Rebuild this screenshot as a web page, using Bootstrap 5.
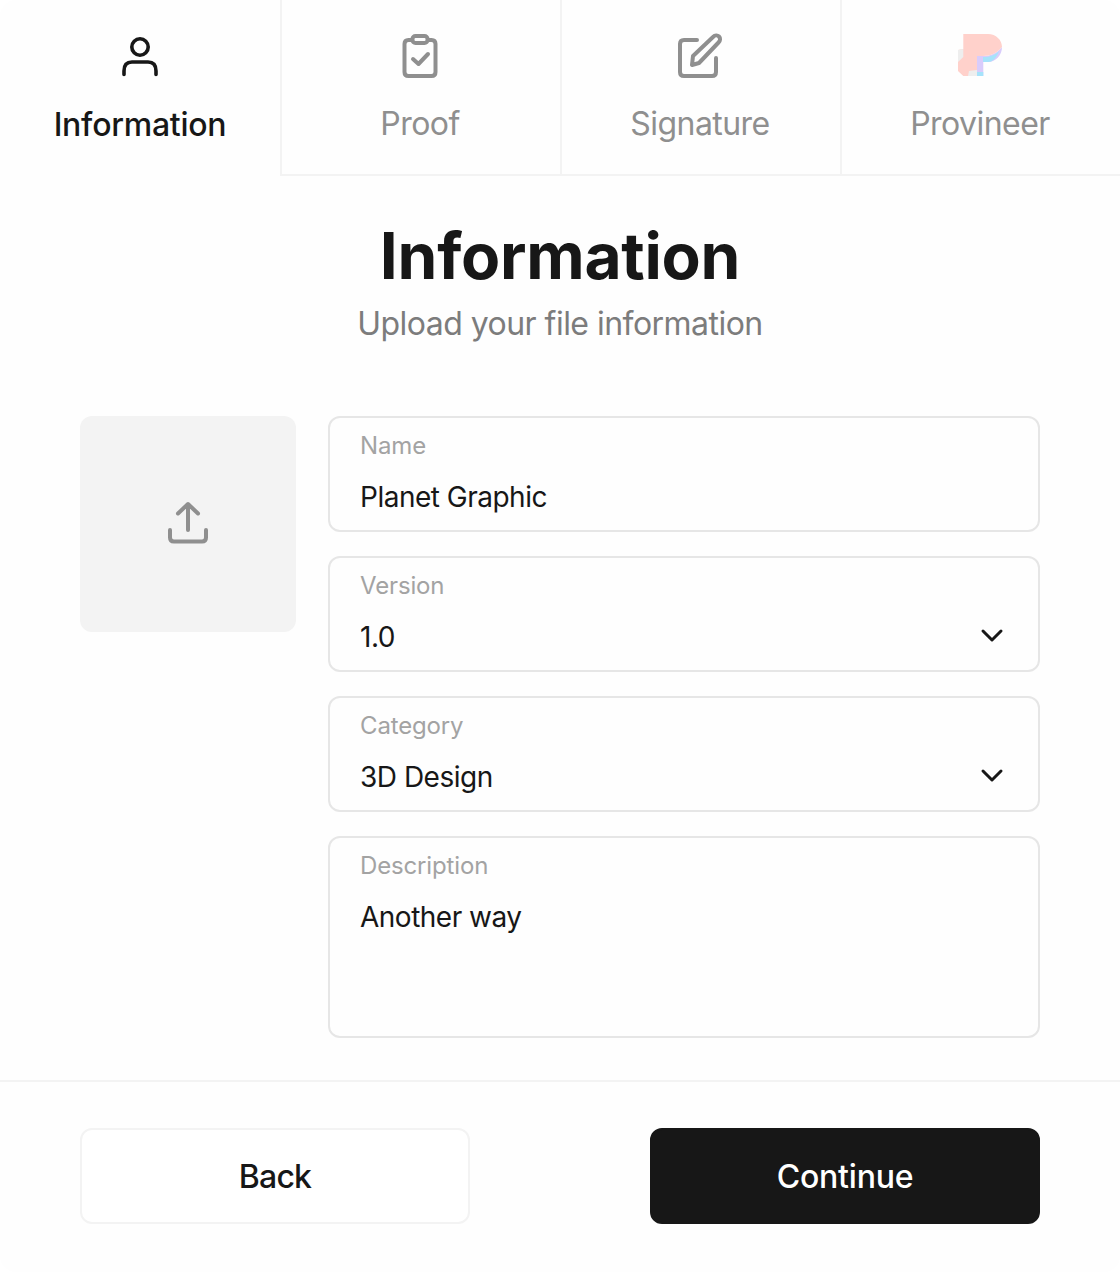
<!DOCTYPE html>
<html lang="en">
<head>
<meta charset="utf-8">
<title>Information</title>
<link href="https://cdn.jsdelivr.net/npm/bootstrap@5.3.0/dist/css/bootstrap.min.css" rel="stylesheet">
<style>
html,body{background:#fff;}
body{font-family:"Inter","Liberation Sans",sans-serif;color:#171717;width:1120px;height:1272px;overflow:hidden;}
.sheet{height:1272px;background:#fefefe;border-radius:16px;}
.step-bar{height:176px;}
.step{width:280px;height:176px;padding:32px 2px 0 0;color:#8f8f8f;font-size:32px;line-height:40px;letter-spacing:-.55px;border-bottom:2px solid #f3f3f3;border-left:2px solid #f3f3f3;}
.step svg{display:block;width:48px;height:48px;margin-bottom:24px;}
.step-on{color:#171717;font-weight:500;border:0;padding:32px 0 0;letter-spacing:-.25px;}
.step-on svg{margin-bottom:25px;}
.title-main{font-size:64px;line-height:72px;font-weight:700;letter-spacing:-.25px;margin:44px 0 0;color:#171717;}
.title-sub{font-size:32px;line-height:40px;color:#7c7c7c;letter-spacing:-.53px;margin:12px 0 0;}
.form-zone{padding:72px 80px 0;gap:32px;}
.drop{width:216px;height:216px;background:#f3f3f3;border-radius:12px;flex:none;}
.drop svg{width:48px;height:48px;}
.fields{width:712px;gap:24px;}
.field{height:116px;border:2px solid #e6e6e6;border-radius:12px;padding:13px 30px 0;position:relative;}
.field-tall{height:202px;}
.field-label{font-size:24px;line-height:30px;color:#a3a3a3;letter-spacing:-.15px;}
.field-value{font-size:28px;line-height:36px;color:#171717;margin-top:18px;letter-spacing:-.5px;}
.chev{position:absolute;right:30px;top:61px;width:32px;height:32px;}
.rule{height:2px;background:#f3f3f3;margin-top:42px;}
.foot{padding:46px 80px 0;}
.act{width:390px;height:96px;border-radius:12px;font-size:32px;font-weight:500;display:flex;align-items:center;justify-content:center;padding:2px 0 0;}
.act-back{background:#fff;border:2px solid #f3f3f3;color:#171717;letter-spacing:-.8px;}
.act-go{background:#171717;border:2px solid #171717;color:#fff;letter-spacing:-.2px;}
</style>
</head>
<body>
<div class="sheet">
  <div class="step-bar d-flex">
    <div class="step step-on d-flex flex-column align-items-center">
      <svg viewBox="0 0 48 48" fill="none" stroke="#171717" stroke-width="3.600" stroke-linecap="round" stroke-linejoin="round"><circle cx="24" cy="15" r="8.200"/><path d="M8 42.500v-3.500c0-6 3-9 8-9h16c5 0 8 3 8 9v3.500"/></svg>
      <span>Information</span>
    </div>
    <div class="step d-flex flex-column align-items-center">
      <svg viewBox="0 0 48 48" fill="none" stroke="#8f8f8f" stroke-width="4" stroke-linecap="round" stroke-linejoin="round"><path d="M16 8h-3.500c-2.500 0-4 1.500-4 4v28c0 2.500 1.500 4 4 4h23c2.500 0 4-1.500 4-4V12c0-2.500-1.500-4-4-4H32"/><rect x="16.500" y="4" width="15" height="7" rx="3"/><path d="M17 27l5.500 5L32 22"/></svg>
      <span>Proof</span>
    </div>
    <div class="step d-flex flex-column align-items-center">
      <svg viewBox="0 0 48 48" fill="none" stroke="#8f8f8f" stroke-width="4" stroke-linecap="round" stroke-linejoin="round"><path d="M21 8H8c-2.500 0-4 1.500-4 4v28c0 2.500 1.500 4 4 4h28c2.500 0 4-1.500 4-4V26"/><path d="M17 24L37 5c2-2 4.500-2 6-.5s1.500 4-.5 6L23 31l-7 2z"/></svg>
      <span>Signature</span>
    </div>
    <div class="step d-flex flex-column align-items-center">
      <svg viewBox="0 0 48 48" aria-hidden="true"><path fill="#d9ccfb" d="M21 24h6.300v20H21zM46 15c0 8-6 15-14 15h-5V24c8 0 14-3 19-9z"/><path fill="#a6e3fb" d="M27 25c7 0 12-2 16-6-2 6-6 11-11 11h-5zM21 40h6.300v4H21z"/><path fill="#ffd1cb" d="M7.300 2H32c8 0 14 6 14 13-5 6-11 9-19 9h-6v20H7.300L2 39V18l5.300-1z"/><path fill="#eeeeee" d="M2 18l5.300-1v8L2 30zM12 44l1-5 8-1v6z"/></svg>
      <span>Provineer</span>
    </div>
  </div>
  <h1 class="title-main text-center">Information</h1>
  <p class="title-sub text-center">Upload your file information</p>
  <div class="form-zone d-flex align-items-start">
    <div class="drop d-flex align-items-center justify-content-center">
      <svg viewBox="0 0 48 48" fill="none" stroke="#8f8f8f" stroke-width="4" stroke-linecap="round" stroke-linejoin="round"><path d="M24 30V5M14 13.500L24 4l10 9.500"/><path d="M6 30v7.500c0 2.500 1.500 4 4 4h28c2.500 0 4-1.500 4-4V30"/></svg>
    </div>
    <div class="fields d-flex flex-column">
      <div class="field"><div class="field-label">Name</div><div class="field-value">Planet Graphic</div></div>
      <div class="field"><div class="field-label">Version</div><div class="field-value">1.0</div><svg class="chev" viewBox="0 0 32 32" fill="none" stroke="#171717" stroke-width="3" stroke-linecap="round" stroke-linejoin="round"><path d="M7 12l9 9 9-9"/></svg></div>
      <div class="field"><div class="field-label">Category</div><div class="field-value">3D Design</div><svg class="chev" viewBox="0 0 32 32" fill="none" stroke="#171717" stroke-width="3" stroke-linecap="round" stroke-linejoin="round"><path d="M7 12l9 9 9-9"/></svg></div>
      <div class="field field-tall"><div class="field-label">Description</div><div class="field-value">Another way</div></div>
    </div>
  </div>
  <div class="rule"></div>
  <div class="foot d-flex justify-content-between">
    <button type="button" class="btn act act-back">Back</button>
    <button type="button" class="btn act act-go">Continue</button>
  </div>
</div>
<script src="https://cdn.jsdelivr.net/npm/bootstrap@5.3.0/dist/js/bootstrap.bundle.min.js"></script>
</body>
</html>
